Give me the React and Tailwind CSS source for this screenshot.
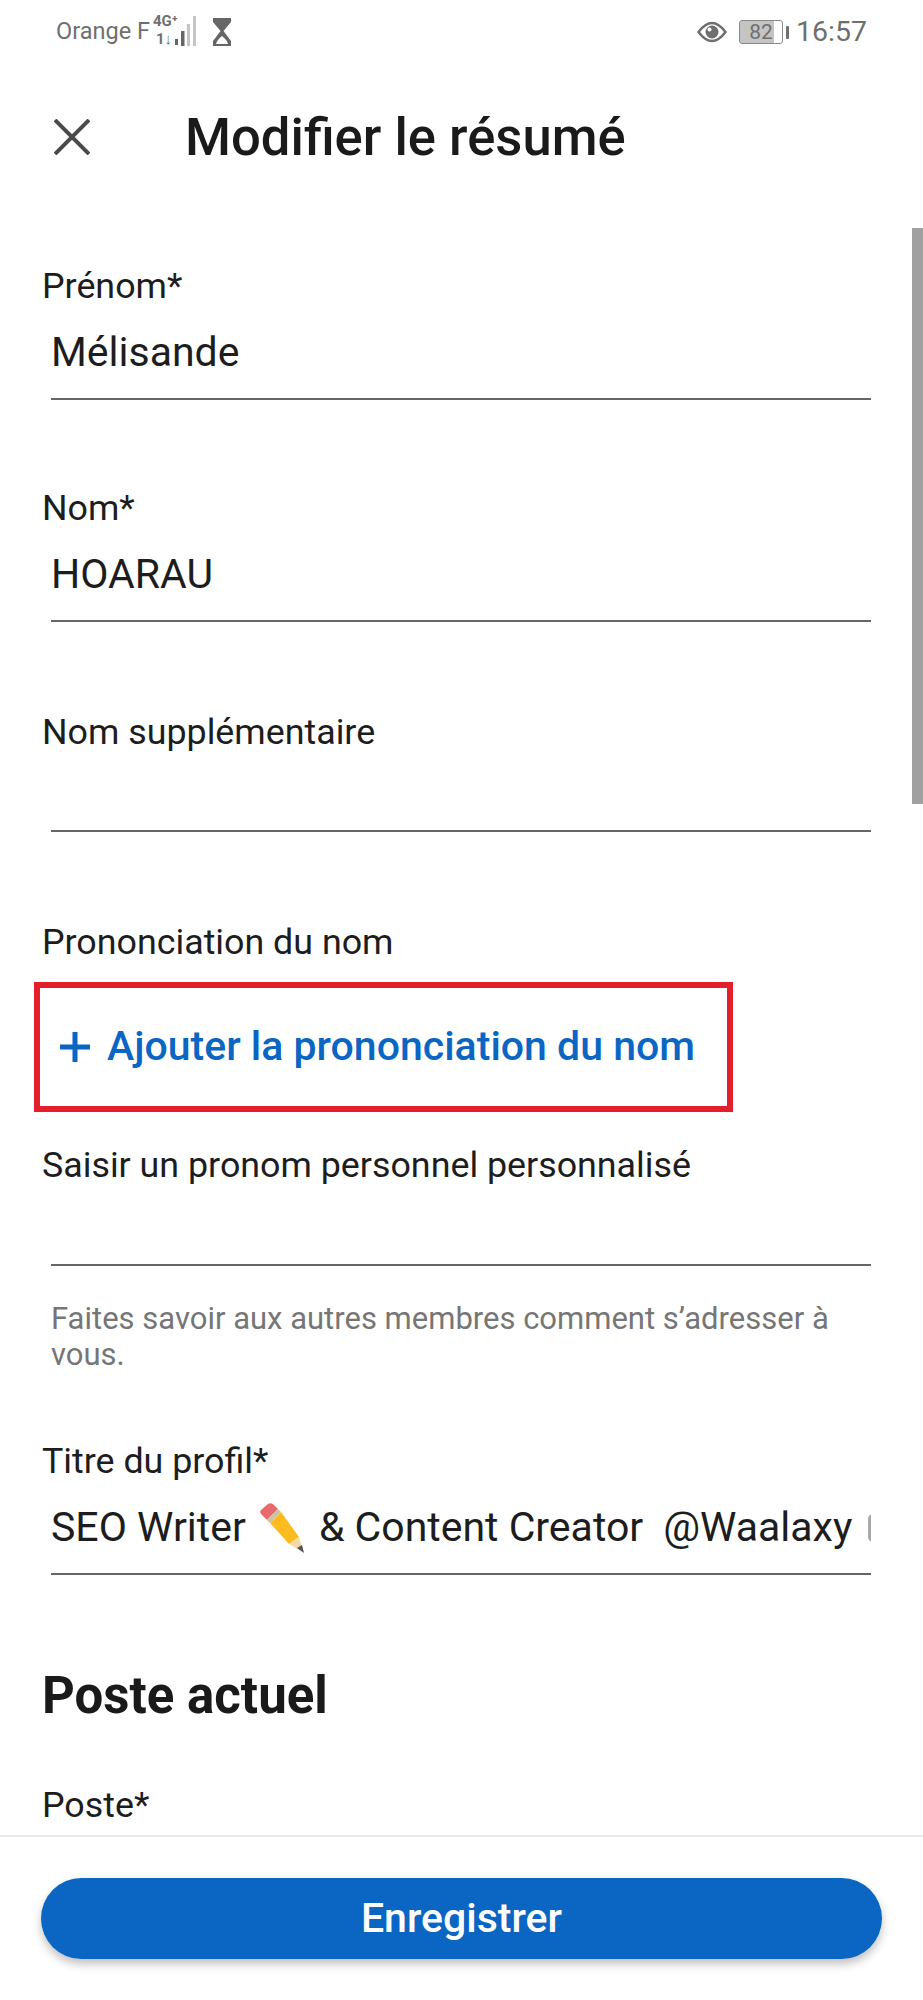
const roboto = { fontFamily: 'Roboto, sans-serif' }

function Field({ label, value, valueHeight = 'h-[92px]', className = '', children }) {
  return (
    <div className={className}>
      <p className="text-[35.8px] leading-[44px] text-[#1d1d1d]">{label}</p>
      <div className={`ml-[9px] flex items-center overflow-hidden whitespace-nowrap border-b-2 border-[#666666] text-[41px] text-[#1d1d1d] ${valueHeight}`}>
        {value}
        {children}
      </div>
    </div>
  )
}

function Pencil() {
  return (
    <svg viewBox="0 0 48 52" className="ml-[12px] mr-[13px] h-[52px] w-[48px] shrink-0">
      <path d="M3 8 L10 2 Q13 0 16 3 L20 7 L9 18 L4 13 Q1 10 3 8Z" fill="#e86a6a" />
      <path d="M9 18 L20 7 L23 10 L12 21Z" fill="#c9c2a8" />
      <path d="M12 21 L23 10 L41 35 L31 42Z" fill="#fdbb1f" />
      <path d="M31 42 L41 35 L45 50Z" fill="#f2d9a8" />
      <path d="M39 46 L44 43 L46 51Z" fill="#555555" />
    </svg>
  )
}

function StatusBar() {
  return (
    <div className="flex h-[64px] items-center justify-between pl-[56px] pr-[56px] text-[#6f6f6f]">
      <div className="flex items-center">
        <span className="text-[23.5px]">Orange F</span>
        <div className="relative ml-[3px] h-[32px] w-[44px]">
          <span className="absolute left-0 top-[-3px] text-[15px] font-bold leading-[16px]">4G⁺</span>
          <span className="absolute left-[3px] top-[15px] text-[15px] font-bold leading-[16px]">1↓</span>
          <svg viewBox="0 0 44 32" className="absolute inset-0 h-[32px] w-[44px]">
            <rect x="22" y="23" width="3" height="6" fill="#666666" />
            <rect x="28" y="15" width="3.5" height="15" fill="#666666" />
            <rect x="34" y="8" width="3" height="22" fill="#c4c4c4" />
            <rect x="40" y="0" width="3" height="30" fill="#c4c4c4" />
          </svg>
        </div>
        <svg viewBox="0 0 22 30" className="ml-[14px] h-[30px] w-[22px]">
          <path d="M2 1H20V5L12.5 14L20 24V29H2V24L9.5 14L2 5Z" fill="#666666" />
          <path d="M11 19Q6 23 5 27H17Q16 23 11 19Z" fill="#ffffff" />
        </svg>
      </div>
      <div className="flex items-center">
        <svg viewBox="0 0 30 24" className="h-[24px] w-[30px]">
          <path d="M1.5 12 Q15 -6 28.5 12 Q15 30 1.5 12Z" fill="none" stroke="#6f6f6f" strokeWidth="2.5" />
          <circle cx="15" cy="12" r="6.5" fill="#6f6f6f" />
          <circle cx="12.5" cy="9.5" r="2" fill="#ffffff" />
        </svg>
        <div className="ml-[12px] flex h-[24px] w-[44px] items-center justify-center overflow-hidden rounded-[3px] border border-[#8a8a8a] bg-[linear-gradient(90deg,#c4c4c4_82%,#ffffff_82%)] text-[21px] leading-none">82</div>
        <div className="ml-[3px] h-[13px] w-[3px] rounded-[1px] bg-[#6f6f6f]" />
        <span className="ml-[7px] text-[28.5px] leading-none">16:57</span>
      </div>
    </div>
  )
}

export default function App() {
  return (
    <div style={roboto} className="relative flex h-[2000px] w-[923px] flex-col overflow-hidden bg-white">
      <StatusBar />

      {/* Header */}
      <div className="flex h-[146px] items-center pl-[54px]">
        <svg viewBox="0 0 36 36" className="h-[36px] w-[36px] text-[#4a4a4a]" fill="none" stroke="currentColor" strokeWidth="4">
          <path d="M1 1L35 35M35 1L1 35" />
        </svg>
        <h1 className="ml-[95px] text-[52.6px] font-medium text-[#1a1a1a]">Modifier le résumé</h1>
      </div>

      {/* Form */}
      <main className="min-h-0 flex-1 overflow-hidden pl-[42px] pr-[52px] pt-[54px]">
        <Field label="Prénom*" value="Mélisande" />
        <Field label="Nom*" value="HOARAU" className="mt-[86px]" />
        <Field label="Nom supplémentaire" valueHeight="h-[78px]" className="mt-[88px]" />

        <p className="mt-[88px] text-[35.8px] leading-[44px] text-[#1d1d1d]">Prononciation du nom</p>
        <div className="ml-[-8px] mt-[18px] flex h-[130px] w-[699px] items-center border-[6px] border-[#e31f2b] pl-[20px]">
          <svg viewBox="0 0 30 30" className="h-[30px] w-[30px]" fill="none" stroke="#0a66c2" strokeWidth="5">
            <path d="M15 0V30M0 15H30" />
          </svg>
          <span className="ml-[17px] text-[41px] font-medium text-[#0a66c2]">Ajouter la prononciation du nom</span>
        </div>

        <Field label="Saisir un pronom personnel personnalisé" valueHeight="h-[79px]" className="mt-[31px]" />
        <p className="ml-[9px] mt-[35px] text-[31px] leading-[36px] text-[#767676]">
          Faites savoir aux autres membres comment s’adresser à vous.
        </p>

        <Field
          label="Titre du profil*"
          value={
            <>
              SEO Writer
              <Pencil />
              <span className="whitespace-pre">& Content Creator</span>
              <span className="ml-[20px]">@Waalaxy</span>
            </>
          }
          className="mt-[66px]"
        >
          <span className="ml-[16px] h-[28px] w-[5px] shrink-0 rounded-l-full border-l-[3px] border-[#a8a8a8]" />
        </Field>

        <h2 className="mt-[93px] text-[51px] font-bold leading-[56px] text-[#1a1a1a]">Poste actuel</h2>
        <p className="mt-[59px] text-[35.8px] leading-[44px] text-[#1d1d1d]">Poste*</p>
      </main>

      {/* Footer */}
      <div className="h-[165px] shrink-0 border-t-2 border-[#e8e8e8] bg-white px-[41px] pt-[41px]">
        <button className="h-[81px] w-[841px] rounded-full bg-[#0a66c2] text-[41px] font-medium text-white shadow-[0_5px_10px_rgba(0,0,0,0.25)]">
          Enregistrer
        </button>
      </div>

      {/* Scrollbar */}
      <div className="absolute right-0 top-[228px] h-[576px] w-[11px] bg-[#a0a0a0]" />
    </div>
  )
}
